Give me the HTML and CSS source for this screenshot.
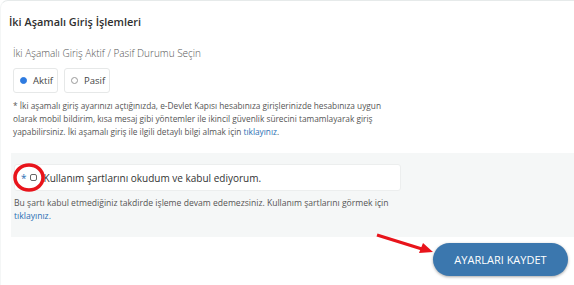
FILE: index.html
```html
<!DOCTYPE html>
<html lang="tr">

<head>
    <meta charset="UTF-8">
    <title>İki Aşamalı Giriş İşlemleri</title>
    <link rel="stylesheet" href="styles.css">
</head>

<body>
    <div class="card">
        <h2 class="card-title">İki Aşamalı Giriş İşlemleri</h2>

        <p class="field-label">İki Aşamalı Giriş Aktif / Pasif Durumu Seçin</p>
        <div class="radio-group">
            <label class="radio-option">
                <span class="radio-dot checked"></span>
                <span>Aktif</span>
            </label>
            <label class="radio-option">
                <span class="radio-dot"></span>
                <span>Pasif</span>
            </label>
        </div>

        <p class="note">
            * İki aşamalı giriş ayarınızı açtığınızda, e-Devlet Kapısı hesabınıza girişlerinizde hesabınıza uygun<br>
            olarak mobil bildirim, kısa mesaj gibi yöntemler ile ikincil güvenlik sürecini tamamlayarak giriş<br>
            yapabilirsiniz. İki aşamalı giriş ile ilgili detaylı bilgi almak için <a href="#">tıklayınız</a>.
        </p>

        <div class="terms-panel">
            <div class="terms-box">
                <span class="required">*</span>
                <span class="check-box"></span>
                <span class="terms-text">Kullanım şartlarını okudum ve kabul ediyorum.</span>
            </div>
            <p class="terms-note">
                Bu şartı kabul etmediğiniz takdirde işleme devam edemezsiniz. Kullanım şartlarını görmek için<br>
                <a href="#">tıklayınız.</a>
            </p>
        </div>

        <div class="actions">
            <button class="save-btn">AYARLARI KAYDET</button>
        </div>
    </div>

    <!-- işaretlemeler -->
    <svg class="marks" width="574" height="285" viewBox="0 0 574 285">
        <ellipse cx="29" cy="177.5" rx="14" ry="12.5" fill="none" stroke="#e8141b" stroke-width="3.5" />
        <line x1="377" y1="235" x2="422" y2="249" stroke="#e8141b" stroke-width="3.2" />
        <polygon points="433,252 419,253 423,243" fill="#e8141b" />
    </svg>
</body>

</html>
```

FILE: styles.css
```css
body {
    margin: 0;
    background: #fff;
    font-family: 'Open Sans', 'Noto Sans', sans-serif;
    color: #333;
    position: relative;
}

.card {
    border-top: 1px solid #e6eaea;
    border-left: 1px solid #f4f6f6;
    border-radius: 8px 0 0 0;
    padding: 11px 0 10px 9px;
}

.card-title {
    margin: 0 0 0 -1px;
    font-size: 10.9px;
    font-weight: 600;
    line-height: 20px;
    color: #2f2f2f;
}

.field-label {
    margin: 13px 0 0 3px;
    font-size: 10px;
    line-height: 16px;
    font-weight: 300;
    color: #555;
}

.radio-group {
    display: flex;
    gap: 6px;
    margin: 7px 0 0 3px;
}

.radio-option {
    display: flex;
    align-items: center;
    gap: 6px;
    height: 25px;
    padding: 0 4px 0 6px;
    border: 1px solid #e6e8e8;
    border-radius: 3px;
    font-size: 9.5px;
    color: #444;
    box-sizing: border-box;
}

.radio-dot {
    width: 7px;
    height: 7px;
    border: 1px solid #999;
    border-radius: 50%;
    box-sizing: border-box;
}

.radio-dot.checked {
    background: #2e7be0;
    border-color: #2e7be0;
}

.note {
    margin: 6px 0 0 3px;
    font-size: 8.3px;
    line-height: 13px;
    color: #555;
}

a {
    color: #2b6fb4;
    text-decoration: none;
}

.terms-panel {
    margin-top: 15px;
    margin-left: 1px;
    background: #f5f7f7;
    padding: 11px 0 14px 3px;
}

.terms-box {
    display: flex;
    align-items: center;
    width: 387px;
    height: 27px;
    box-sizing: border-box;
    background: #fff;
    border: 1px solid #eceeee;
    border-radius: 3px;
    padding-left: 6px;
}

.required {
    color: #2b6fb4;
    font-size: 10px;
    margin-right: 3px;
}

.check-box {
    width: 7px;
    height: 7px;
    border: 1px solid #666;
    border-radius: 2px;
    box-sizing: border-box;
    margin-right: 7px;
}

.terms-text {
    font-size: 10px;
    color: #333;
}

.terms-note {
    margin: 6px 0 0 0;
    font-size: 8.6px;
    line-height: 13px;
    color: #555;
}

.actions {
    display: flex;
    justify-content: flex-end;
    padding-right: 6px;
    margin-top: 6px;
}

.save-btn {
    width: 135px;
    height: 33px;
    border: none;
    border-radius: 17px;
    background: #3b77ae;
    color: #fff;
    font-family: 'Open Sans', sans-serif;
    font-size: 11px;
    box-shadow: 0 1px 3px rgba(0, 0, 0, 0.35);
}

.marks {
    position: absolute;
    left: 0;
    top: 0;
    pointer-events: none;
}
```
